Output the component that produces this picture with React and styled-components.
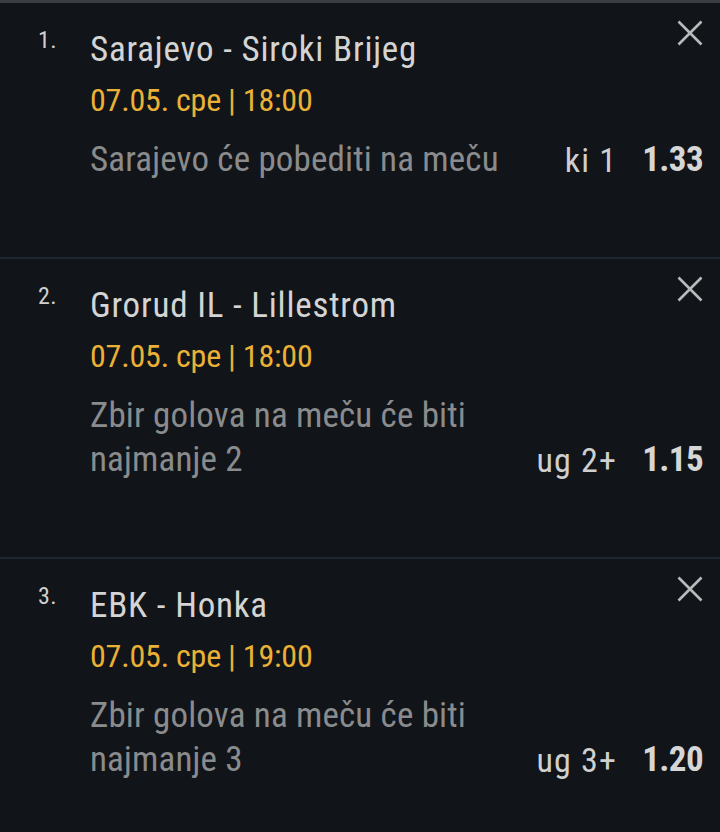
import styled, { createGlobalStyle } from "styled-components";

const GlobalStyle = createGlobalStyle`
body{
  margin:0;
  background:#111418;
  font-family:"Roboto Condensed", Roboto, "Liberation Sans", sans-serif;
}
`;

const Page = styled.div`
min-height:832px;
background:#111418;
border-top:3px solid #3a3d43;
`;

const Item = styled.div`
display:flex;
padding:25px 17px 75px 38px;
border-bottom:${p => (p.last ? "none" : "2px solid #1b2833")};
`;

const Number = styled.div`
width:52px;
flex-shrink:0;
font-size:24px;
line-height:24px;
color:#d0d0d0;
letter-spacing:0.5px;
`;

const Body = styled.div`
flex:1;
display:flex;
flex-direction:column;
`;

const TitleRow = styled.div`
display:flex;
align-items:flex-start;
justify-content:space-between;
`;

const Title = styled.div`
font-size:35px;
line-height:44px;
letter-spacing:0.8px;
color:#d4d4d4;
`;

const CloseBtn = styled.button`
background:none;
border:none;
padding:0;
margin-top:-8px;
width:26px;
height:26px;
display:flex;
cursor:pointer;
`;

const Date = styled.div`
margin-top:6px;
font-size:32px;
line-height:44px;
letter-spacing:-0.2px;
color:#eab136;
`;

const PickRow = styled.div`
margin-top:16px;
display:flex;
align-items:flex-end;
`;

const Desc = styled.div`
flex:1;
max-width:430px;
font-size:35px;
line-height:44px;
letter-spacing:0.15px;
color:#8a8b8d;
`;

const Code = styled.div`
margin-left:auto;
font-size:34px;
line-height:44px;
letter-spacing:1.2px;
color:#cfcfcf;
`;

const Odds = styled.div`
margin-left:25px;
font-size:35px;
line-height:44px;
font-weight:700;
letter-spacing:-0.6px;
color:#d6d6d6;
`;

const CloseIcon = () => (
  <svg width="26" height="26" viewBox="0 0 26 26">
    <path d="M1.5 1.5 L24.5 24.5 M24.5 1.5 L1.5 24.5" stroke="#b9babb" strokeWidth="2.6" />
  </svg>
);

const bets = [
  { n: 1, match: "Sarajevo - Siroki Brijeg", date: "07.05. cpe | 18:00", pick: "Sarajevo će pobediti na meču", code: "ki 1", odds: "1.33" },
  { n: 2, match: "Grorud IL - Lillestrom", date: "07.05. cpe | 18:00", pick: "Zbir golova na meču će biti najmanje 2", code: "ug 2+", odds: "1.15" },
  { n: 3, match: "EBK - Honka", date: "07.05. cpe | 19:00", pick: "Zbir golova na meču će biti najmanje 3", code: "ug 3+", odds: "1.20" },
];

export default function App() {
  return (
    <>
      <GlobalStyle />
      <Page>
        {bets.map((b, i) => (
          <Item key={b.n} last={i === bets.length - 1}>
            <Number>{b.n}.</Number>
            <Body>
              <TitleRow>
                <Title>{b.match}</Title>
                <CloseBtn aria-label="Ukloni">
                  <CloseIcon />
                </CloseBtn>
              </TitleRow>
              <Date>{b.date}</Date>
              <PickRow>
                <Desc>{b.pick}</Desc>
                <Code>{b.code}</Code>
                <Odds>{b.odds}</Odds>
              </PickRow>
            </Body>
          </Item>
        ))}
      </Page>
    </>
  );
}
